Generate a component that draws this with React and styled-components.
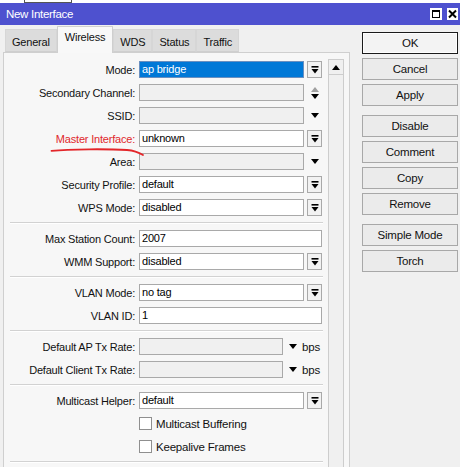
import React from "react";
import styled, { createGlobalStyle } from "styled-components";

const GlobalStyle = createGlobalStyle`
  html, body {
    margin: 0;
    padding: 0;
    background: #f0f0f0;
  }
  body {
    font-family: "Liberation Sans", Arial, sans-serif;
    font-size: 11px;
    letter-spacing: -0.2px;
    color: #111;
  }
`;

const Window = styled.div`
  position: relative;
  width: 460px;
  height: 467px;
  overflow: hidden;
  background: #f0f0f0;
  display: flex;
  flex-direction: column;
`;

const TopStrip = styled.div`
  height: 3px;
  background: #fff;
  display: flex;
  align-items: flex-end;
  .ts-box {
    margin-left: 24px;
    width: 46px;
    height: 2px;
    border: 1px solid #555;
    border-top: none;
  }
`;

const TitleBar = styled.div`
  height: 22px;
  background: #4e51cf;
  color: #fff;
  display: flex;
  align-items: center;
  justify-content: space-between;
  padding: 0 2px 0 6px;
  font-size: 11.5px;
  letter-spacing: -0.3px;
`;

const WinButtons = styled.div`
  display: flex;
  gap: 5px;
  align-items: center;
`;

const Body = styled.div`
  flex: 1;
  display: flex;
  padding: 1px 0 0 3px;
  min-height: 0;
`;

const LeftCol = styled.div`
  width: 347px;
  display: flex;
  flex-direction: column;
`;

const TabRow = styled.div`
  height: 26px;
  display: flex;
  align-items: flex-end;
  padding-left: 2px;
`;

const Tab = styled.div`
  position: relative;
  box-sizing: border-box;
  height: ${(p) => (p.$active ? "27px" : "23px")};
  margin-bottom: ${(p) => (p.$active ? "-1px" : "0")};
  padding: ${(p) => (p.$active ? "3px 7px 0" : "5px 6px 0")};
  background: ${(p) => (p.$active ? "#f8f8f8" : "#dcdcdc")};
  border: 1px solid ${(p) => (p.$active ? "#cfcfcf" : "#d6d6d6")};
  border-bottom: ${(p) => (p.$active ? "none" : "1px solid #cfcfcf")};
  z-index: ${(p) => (p.$active ? 1 : 0)};
  font-size: 11px;
  line-height: 14px;
`;

const Panel = styled.div`
  flex: 1;
  display: flex;
  background: #f7f7f7;
  border: 1px solid #cfcfcf;
  border-bottom: none;
  padding-top: 5px;
  min-height: 0;
`;

const Form = styled.div`
  width: 323px;
  display: flex;
  flex-direction: column;
`;

const Row = styled.div`
  height: 23px;
  display: grid;
  grid-template-columns: 131px 183px;
  column-gap: 4px;
  align-items: center;
`;

const Label = styled.div`
  text-align: right;
  white-space: nowrap;
  color: ${(p) => (p.$red ? "#e0282c" : "#111")};
`;

const Field = styled.div`
  display: flex;
  align-items: center;
  height: 17px;
`;

const Input = styled.div`
  box-sizing: border-box;
  flex: ${(p) => (p.$width ? "none" : "1")};
  width: ${(p) => (p.$width ? p.$width + "px" : "auto")};
  height: 17px;
  line-height: 15px;
  padding: 0 2px;
  border: 1px solid ${(p) => (p.$selected ? "#6a8fbf" : "#a9a9a9")};
  background: ${(p) =>
    p.$selected ? "#0078d7" : p.$disabled ? "#f0f0f0" : "#fff"};
  color: ${(p) => (p.$selected ? "#fff" : "#000")};
  white-space: nowrap;
  overflow: hidden;
`;

const DropButton = styled.div`
  box-sizing: border-box;
  width: 15px;
  height: 17px;
  margin-left: 3px;
  border: 1px solid #a9a9a9;
  background: #f2f2f2;
  display: flex;
  align-items: center;
  justify-content: center;
`;

const ArrowSlot = styled.div`
  width: 15px;
  height: 17px;
  margin-left: 3px;
  display: flex;
  flex-direction: column;
  align-items: center;
  justify-content: center;
  gap: 2px;
`;

const Unit = styled.div`
  display: flex;
  align-items: center;
  gap: 5px;
  margin-left: 6px;
  font-size: 11.5px;
`;

const CheckRow = styled.div`
  height: 23px;
  display: flex;
  align-items: center;
  padding-left: 135px;
  gap: 4px;
  font-size: 11.5px;
`;

const CheckBox = styled.div`
  box-sizing: border-box;
  width: 13px;
  height: 13px;
  border: 1px solid #8f8f8f;
  background: #fff;
`;

const Separator = styled.div`
  margin: 3px 4px 3px 6px;
  border-top: 1px solid #d2d2d2;
  border-bottom: 1px solid #fff;
`;

const ScrollBar = styled.div`
  box-sizing: border-box;
  width: 16px;
  margin-left: 1px;
  margin-top: 1px;
  border-left: 1px solid #cdcdcd;
  border-right: 1px solid #cdcdcd;
  background: #f0f0f0;
`;

const ScrollUp = styled.div`
  height: 14px;
  border-top: 1px solid #cdcdcd;
  border-bottom: 1px solid #cdcdcd;
  display: flex;
  align-items: center;
  justify-content: center;
`;

const RightCol = styled.div`
  width: 96px;
  margin-left: 12px;
  padding-top: 6px;
  display: flex;
  flex-direction: column;
  gap: 9px;
`;

const ButtonGroup = styled.div`
  display: flex;
  flex-direction: column;
  gap: 4px;
`;

const Button = styled.div`
  box-sizing: border-box;
  height: 22px;
  display: flex;
  align-items: center;
  justify-content: center;
  background: ${(p) => (p.$default ? "#f3f3f3" : "#ebebeb")};
  border: 1px solid ${(p) => (p.$default ? "#1a1a1a" : "#a8a8a8")};
  box-shadow: ${(p) => (p.$default ? "inset 0 0 0 1px #fdfdfd" : "none")};
  font-size: 11.5px;
  color: #111;
`;

const Annotation = styled.svg`
  position: absolute;
  left: 0;
  top: 0;
  pointer-events: none;
`;

const ComboIcon = () => (
  <svg width="8" height="8" viewBox="0 0 8 8">
    <rect x="0.5" y="0" width="7" height="1.6" fill="#000" />
    <polygon points="0.5,3 7.5,3 4,7.5" fill="#000" />
  </svg>
);

const DownTriangle = ({ color = "#000" }) => (
  <svg width="8" height="5" viewBox="0 0 8 5">
    <polygon points="0,0 8,0 4,5" fill={color} />
  </svg>
);

const UpTriangle = ({ color = "#000" }) => (
  <svg width="8" height="5" viewBox="0 0 8 5">
    <polygon points="0,5 8,5 4,0" fill={color} />
  </svg>
);

const MaxIcon = () => (
  <svg width="12" height="12" viewBox="0 0 12 12">
    <rect x="0" y="0" width="12" height="12" fill="#fff" />
    <rect x="2.5" y="2.5" width="7" height="7" fill="none" stroke="#000" strokeWidth="1" />
    <rect x="2" y="2" width="8" height="2" fill="#000" />
  </svg>
);

const CloseIcon = () => (
  <svg width="11" height="12" viewBox="0 0 11 12">
    <rect x="0" y="0" width="11" height="12" fill="#fff" />
    <path d="M2 2.5 L9 9.5 M9 2.5 L2 9.5" stroke="#000" strokeWidth="2" />
  </svg>
);

function FieldRow({ label, value, red, disabled, selected, kind }) {
  return (
    <Row>
      <Label $red={red}>{label}</Label>
      <Field>
        {kind === "rate" ? (
          <>
            <Input $width={144} $disabled>
              {value}
            </Input>
            <Unit>
              <DownTriangle />
              <span>bps</span>
            </Unit>
          </>
        ) : (
          <>
            <Input $disabled={disabled} $selected={selected}>
              {value}
            </Input>
            {kind === "combo" && (
              <DropButton>
                <ComboIcon />
              </DropButton>
            )}
            {kind === "spin" && (
              <ArrowSlot>
                <UpTriangle color="#a0a0a0" />
                <DownTriangle />
              </ArrowSlot>
            )}
            {kind === "arrow" && (
              <ArrowSlot>
                <DownTriangle />
              </ArrowSlot>
            )}
          </>
        )}
      </Field>
    </Row>
  );
}

const tabs = ["General", "Wireless", "WDS", "Status", "Traffic"];

export default function App() {
  return (
    <>
      <GlobalStyle />
      <Window>
        <TopStrip>
          <div className="ts-box" />
        </TopStrip>
        <TitleBar>
          <span>New Interface</span>
          <WinButtons>
            <MaxIcon />
            <CloseIcon />
          </WinButtons>
        </TitleBar>
        <Body>
          <LeftCol>
            <TabRow>
              {tabs.map((t) => (
                <Tab key={t} $active={t === "Wireless"}>
                  {t}
                </Tab>
              ))}
            </TabRow>
            <Panel>
              <Form>
                <FieldRow label="Mode:" value="ap bridge" selected kind="combo" />
                <FieldRow label="Secondary Channel:" disabled kind="spin" />
                <FieldRow label="SSID:" disabled kind="arrow" />
                <FieldRow label="Master Interface:" value="unknown" red kind="combo" />
                <FieldRow label="Area:" disabled kind="arrow" />
                <FieldRow label="Security Profile:" value="default" kind="combo" />
                <FieldRow label="WPS Mode:" value="disabled" kind="combo" />
                <Separator />
                <FieldRow label="Max Station Count:" value="2007" />
                <FieldRow label="WMM Support:" value="disabled" kind="combo" />
                <Separator />
                <FieldRow label="VLAN Mode:" value="no tag" kind="combo" />
                <FieldRow label="VLAN ID:" value="1" />
                <Separator />
                <FieldRow label="Default AP Tx Rate:" kind="rate" />
                <FieldRow label="Default Client Tx Rate:" kind="rate" />
                <Separator />
                <FieldRow label="Multicast Helper:" value="default" kind="combo" />
                <CheckRow>
                  <CheckBox />
                  <span>Multicast Buffering</span>
                </CheckRow>
                <CheckRow>
                  <CheckBox />
                  <span>Keepalive Frames</span>
                </CheckRow>
                <Separator />
              </Form>
              <ScrollBar>
                <ScrollUp>
                  <UpTriangle />
                </ScrollUp>
              </ScrollBar>
            </Panel>
          </LeftCol>
          <RightCol>
            <ButtonGroup>
              <Button $default>OK</Button>
              <Button>Cancel</Button>
              <Button>Apply</Button>
            </ButtonGroup>
            <ButtonGroup>
              <Button>Disable</Button>
              <Button>Comment</Button>
              <Button>Copy</Button>
              <Button>Remove</Button>
            </ButtonGroup>
            <ButtonGroup>
              <Button>Simple Mode</Button>
              <Button>Torch</Button>
            </ButtonGroup>
          </RightCol>
        </Body>
        <Annotation width="460" height="467" viewBox="0 0 460 467">
          <path
            d="M51.5 150.8 C 70 149, 108 148.8, 127 150 C 134 150.6, 139 152.6, 143 155"
            fill="none"
            stroke="#e3262a"
            strokeWidth="1.8"
            strokeLinecap="round"
          />
        </Annotation>
      </Window>
    </>
  );
}
